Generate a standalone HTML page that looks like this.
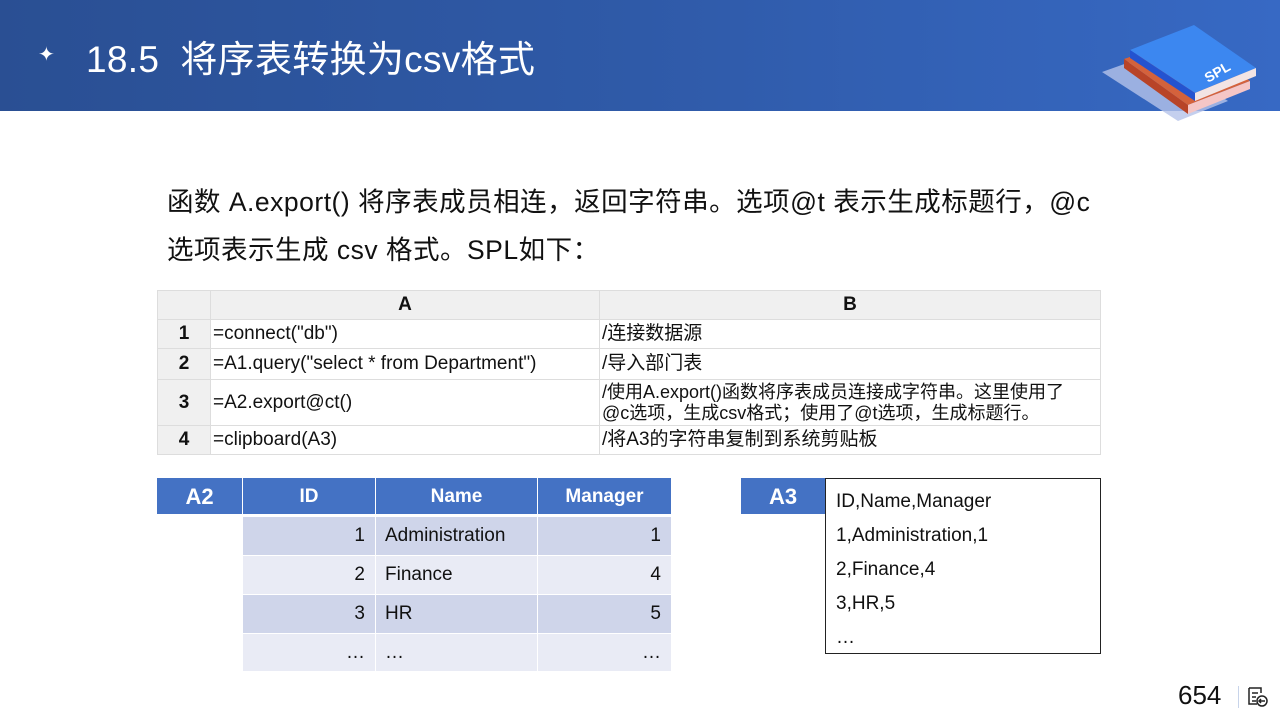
<!DOCTYPE html>
<html><head><meta charset="utf-8"><style>
body{margin:0;width:1280px;height:720px;position:relative;background:#fff;font-family:"Liberation Sans","Noto Sans CJK SC",sans-serif;overflow:hidden}
.hdr{position:absolute;left:0;top:0;width:1280px;height:111px;background:linear-gradient(90deg,#2a4f93 0%,#2f5aa8 50%,#3769c4 100%)}
.ttl{position:absolute;left:86px;top:29px;color:#fff;font-size:37px;letter-spacing:0.3px}
.star{position:absolute;left:38px;top:42px;color:#fff;font-size:20px}
.p{position:absolute;left:167px;font-size:26.5px;color:#111;letter-spacing:0.5px}
.abs{position:absolute;box-sizing:border-box}
table.g{position:absolute;left:157px;top:290px;border-collapse:collapse;font-size:19px;table-layout:fixed;width:943px}
table.g td{border:1px solid #ddd;padding:0 2px;color:#111;vertical-align:middle;line-height:22px;overflow:hidden}
.hd td{background:#f0f0f0;font-weight:bold;text-align:center}
.n{background:#f0f0f0;font-weight:bold;text-align:center}
.c{position:absolute;box-sizing:border-box;font-size:19px;color:#111;line-height:38px}
</style></head><body>
<div class="hdr"></div>
<div class="star">✦</div>
<div class="ttl">18.5&nbsp; 将序表转换为csv格式</div>
<svg class="abs" style="left:1100px;top:15px" width="160" height="110" viewBox="0 0 160 110">
<polygon points="2,57 55,38 128,86 78,106" fill="#b5c3ea" opacity="0.8"/>
<polygon points="24,44 88,22 150,66 88,90" fill="#d4623c"/>
<polygon points="24,44 88,90 88,99 24,53" fill="#b84428"/>
<polygon points="88,90 150,66 150,74 88,99" fill="#f5c6c6"/>
<polygon points="30,35 94,10 156,53 95,78" fill="#3c87f0"/>
<polygon points="30,35 95,78 95,86 30,43" fill="#2453d0"/>
<polygon points="95,78 156,53 156,61 95,86" fill="#f2e4e4"/>
<text x="108" y="68" fill="#fff" font-size="14" font-weight="bold" transform="rotate(-30 108 68)" font-family="Liberation Sans">SPL</text>
</svg>
<div class="p" style="top:180px">函数 A.export() 将序表成员相连，返回字符串。选项@t 表示生成标题行，@c</div>
<div class="p" style="top:228px">选项表示生成 csv 格式。SPL如下：</div>
<table class="g">
<colgroup><col style="width:53px"><col style="width:389px"><col style="width:501px"></colgroup>
<tr class="hd" style="height:29px"><td></td><td>A</td><td>B</td></tr>
<tr style="height:29px"><td class="n">1</td><td>=connect("db")</td><td>/连接数据源</td></tr>
<tr style="height:31px"><td class="n">2</td><td>=A1.query("select * from Department")</td><td>/导入部门表</td></tr>
<tr style="height:46px"><td class="n">3</td><td>=A2.export@ct()</td><td style="font-size:18px;line-height:21px">/使用A.export()函数将序表成员连接成字符串。这里使用了<br>@c选项，生成csv格式；使用了@t选项，生成标题行。</td></tr>
<tr style="height:29px"><td class="n">4</td><td>=clipboard(A3)</td><td>/将A3的字符串复制到系统剪贴板</td></tr>
</table>
<div class="c" style="left:157px;top:478px;width:85px;height:36px;background:#4472c4;color:#fff;font-weight:bold;text-align:center;font-size:22px;line-height:38px">A2</div>
<div class="c" style="left:243px;top:478px;width:132px;height:36px;background:#4472c4;color:#fff;font-weight:bold;text-align:center;line-height:38px">ID</div>
<div class="c" style="left:376px;top:478px;width:161px;height:36px;background:#4472c4;color:#fff;font-weight:bold;text-align:center;line-height:38px">Name</div>
<div class="c" style="left:538px;top:478px;width:133px;height:36px;background:#4472c4;color:#fff;font-weight:bold;text-align:center;line-height:38px">Manager</div>

<div class="c" style="left:243px;top:517px;width:132px;height:38px;background:#cfd5ea;text-align:right;padding-right:10px">1</div>
<div class="c" style="left:376px;top:517px;width:161px;height:38px;background:#cfd5ea;padding-left:9px">Administration</div>
<div class="c" style="left:538px;top:517px;width:133px;height:38px;background:#cfd5ea;text-align:right;padding-right:10px">1</div>
<div class="c" style="left:243px;top:556px;width:132px;height:38px;background:#e9ebf5;text-align:right;padding-right:10px">2</div>
<div class="c" style="left:376px;top:556px;width:161px;height:38px;background:#e9ebf5;padding-left:9px">Finance</div>
<div class="c" style="left:538px;top:556px;width:133px;height:38px;background:#e9ebf5;text-align:right;padding-right:10px">4</div>
<div class="c" style="left:243px;top:595px;width:132px;height:38px;background:#cfd5ea;text-align:right;padding-right:10px">3</div>
<div class="c" style="left:376px;top:595px;width:161px;height:38px;background:#cfd5ea;padding-left:9px">HR</div>
<div class="c" style="left:538px;top:595px;width:133px;height:38px;background:#cfd5ea;text-align:right;padding-right:10px">5</div>
<div class="c" style="left:243px;top:634px;width:132px;height:37px;background:#e9ebf5;text-align:right;padding-right:10px">…</div>
<div class="c" style="left:376px;top:634px;width:161px;height:37px;background:#e9ebf5;padding-left:9px">…</div>
<div class="c" style="left:538px;top:634px;width:133px;height:37px;background:#e9ebf5;text-align:right;padding-right:10px">…</div>

<div class="c" style="left:741px;top:478px;width:84px;height:36px;background:#4472c4;color:#fff;font-weight:bold;text-align:center;font-size:22px;line-height:38px">A3</div>
<div class="c" style="left:825px;top:478px;width:276px;height:176px;border:1px solid #222;padding:6px 0 0 10px;line-height:34px">ID,Name,Manager<br>1,Administration,1<br>2,Finance,4<br>3,HR,5<br>…</div>

<div class="abs" style="left:1178px;top:680px;font-size:26px;color:#111">654</div>
<div class="abs" style="left:1238px;top:686px;width:1px;height:22px;background:#c8d4ea"></div>
<svg class="abs" style="left:1247px;top:686px" width="22" height="22" viewBox="0 0 22 22" fill="none" stroke="#222" stroke-width="1.5">
<path d="M2 2h12v5M2 2v16h8M5 7h6M5 11h4M5 15h4"/><circle cx="15" cy="15" r="5"/><path d="M18 15h-6M14 13l-2 2 2 2"/>
</svg>
</body></html>
